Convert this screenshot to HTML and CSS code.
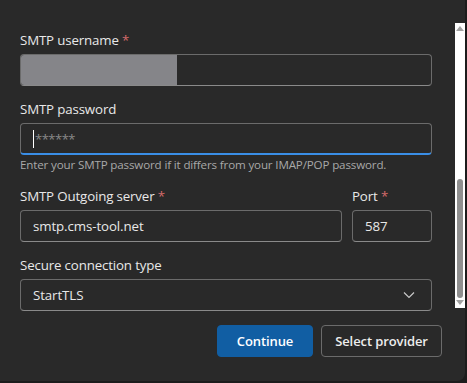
FILE: index.html
```html
<!DOCTYPE html>
<html>
<head>
<meta charset="utf-8">
<link rel="stylesheet" href="styles.css">
</head>
<body>
<div class="dialog">
  <div class="scroll-area">
    <form class="form">
      <div class="field">
        <label class="label">SMTP username <span class="req">*</span></label>
        <div class="input"><span class="redacted"></span></div>
      </div>
      <div class="field">
        <label class="label">SMTP password</label>
        <div class="input focused"><span class="caret"></span><span class="placeholder">******</span></div>
        <div class="help">Enter your SMTP password if it differs from your IMAP/POP password.</div>
      </div>
      <div class="row">
        <div class="field grow">
          <label class="label">SMTP Outgoing server <span class="req">*</span></label>
          <div class="input"><span class="value">smtp.cms-tool.net</span></div>
        </div>
        <div class="field port">
          <label class="label">Port <span class="req">*</span></label>
          <div class="input"><span class="value">587</span></div>
        </div>
      </div>
      <div class="field">
        <label class="label">Secure connection type</label>
        <div class="input select"><span class="value">StartTLS</span>
          <svg class="chev" width="12" height="8" viewBox="0 0 12 8"><path d="M1 1.5 L6 6.5 L11 1.5" fill="none" stroke="#c8c8c8" stroke-width="1.2"/></svg>
        </div>
      </div>
    </form>
    <div class="scrollbar">
      <span class="arrow up"></span>
      <span class="track"><span class="thumb"></span></span>
      <span class="arrow down"></span>
    </div>
  </div>
  <div class="actions">
    <button class="btn primary">Continue</button>
    <button class="btn secondary">Select provider</button>
  </div>
</div>
</body>
</html>
```

FILE: styles.css
```css
html, body {
  margin: 0;
  padding: 0;
  background: #1c1c1c;
}
body {
  width: 467px;
  height: 383px;
  overflow: hidden;
  font-family: "Open Sans", "Noto Sans", sans-serif;
  color: #e6e6e6;
}
.dialog {
  width: 465px;
  height: 381px;
  background: #292929;
  border-bottom-right-radius: 8px;
  display: flex;
  flex-direction: column;
}
.scroll-area {
  display: flex;
  height: 310px;
}
.form {
  flex: 1;
  padding: 30px 0 0 20px;
  display: flex;
  flex-direction: column;
}
.field {
  display: flex;
  flex-direction: column;
  width: 412px;
  margin-bottom: 13px;
}
.label {
  font-size: 13.3px;
  line-height: 20px;
  height: 20px;
  margin-bottom: 4px;
  color: #e8e8e8;
  letter-spacing: -0.15px;
}
.req {
  color: #d46a6a;
}
.input {
  box-sizing: border-box;
  height: 32px;
  border: 1px solid #6b6b6b;
  border-bottom-color: #8a8a8a;
  border-radius: 4px;
  display: flex;
  align-items: center;
  padding: 0 12px;
  position: relative;
  overflow: hidden;
  font-size: 13.3px;
  letter-spacing: -0.1px;
}
.redacted {
  position: absolute;
  left: 0;
  top: 0;
  width: 156px;
  height: 31px;
  background: #858589;
}
.focused {
  border-bottom: 2px solid #3a8ee6;
  height: 32px;
}
.caret {
  width: 1px;
  height: 18px;
  background: #ffffff;
  margin-right: 1px;
}
.placeholder {
  color: #8a8a8a;
  font-size: 13px;
  letter-spacing: -0.5px;
}
.help {
  font-size: 11.6px;
  line-height: 16px;
  margin-top: 2px;
  color: #a8a8a8;
  letter-spacing: -0.15px;
}
.row {
  display: flex;
  gap: 10px;
  width: 412px;
}
.row .field {
  width: auto;
}
.grow {
  flex: 1;
}
.port {
  width: 80px !important;
}
.value {
  color: #e8e8e8;
}
.select {
  justify-content: space-between;
}
.chev {
  margin-right: 4px;
}
.scrollbar {
  width: 10px;
  margin-top: 23px;
  height: 285px;
  background: #ffffff;
  display: flex;
  flex-direction: column;
  align-items: center;
}
.arrow {
  width: 0;
  height: 0;
  border-left: 4px solid transparent;
  border-right: 4px solid transparent;
}
.arrow.up {
  margin-top: 3px;
  border-bottom: 5px solid #a3a3a3;
}
.arrow.down {
  margin-bottom: 3px;
  border-top: 5px solid #a3a3a3;
}
.track {
  flex: 1;
  width: 6px;
  display: flex;
  flex-direction: column;
  justify-content: flex-end;
  padding-bottom: 2px;
}
.thumb {
  width: 6px;
  height: 119px;
  background: #8f8f8f;
  border-radius: 3px;
}
.actions {
  display: flex;
  justify-content: flex-end;
  gap: 8px;
  padding: 15px 23px 0 0;
}
.btn {
  height: 32px;
  border-radius: 4px;
  font-family: "Open Sans", "Noto Sans", sans-serif;
  font-size: 13px;
  font-weight: 600;
  letter-spacing: -0.1px;
  padding: 0;
  cursor: pointer;
}
.primary {
  width: 96px;
  background: #115ea3;
  border: 1px solid #115ea3;
  color: #ffffff;
}
.secondary {
  width: 121px;
  background: #292929;
  border: 1px solid #6b6b6b;
  color: #ededed;
}
```
